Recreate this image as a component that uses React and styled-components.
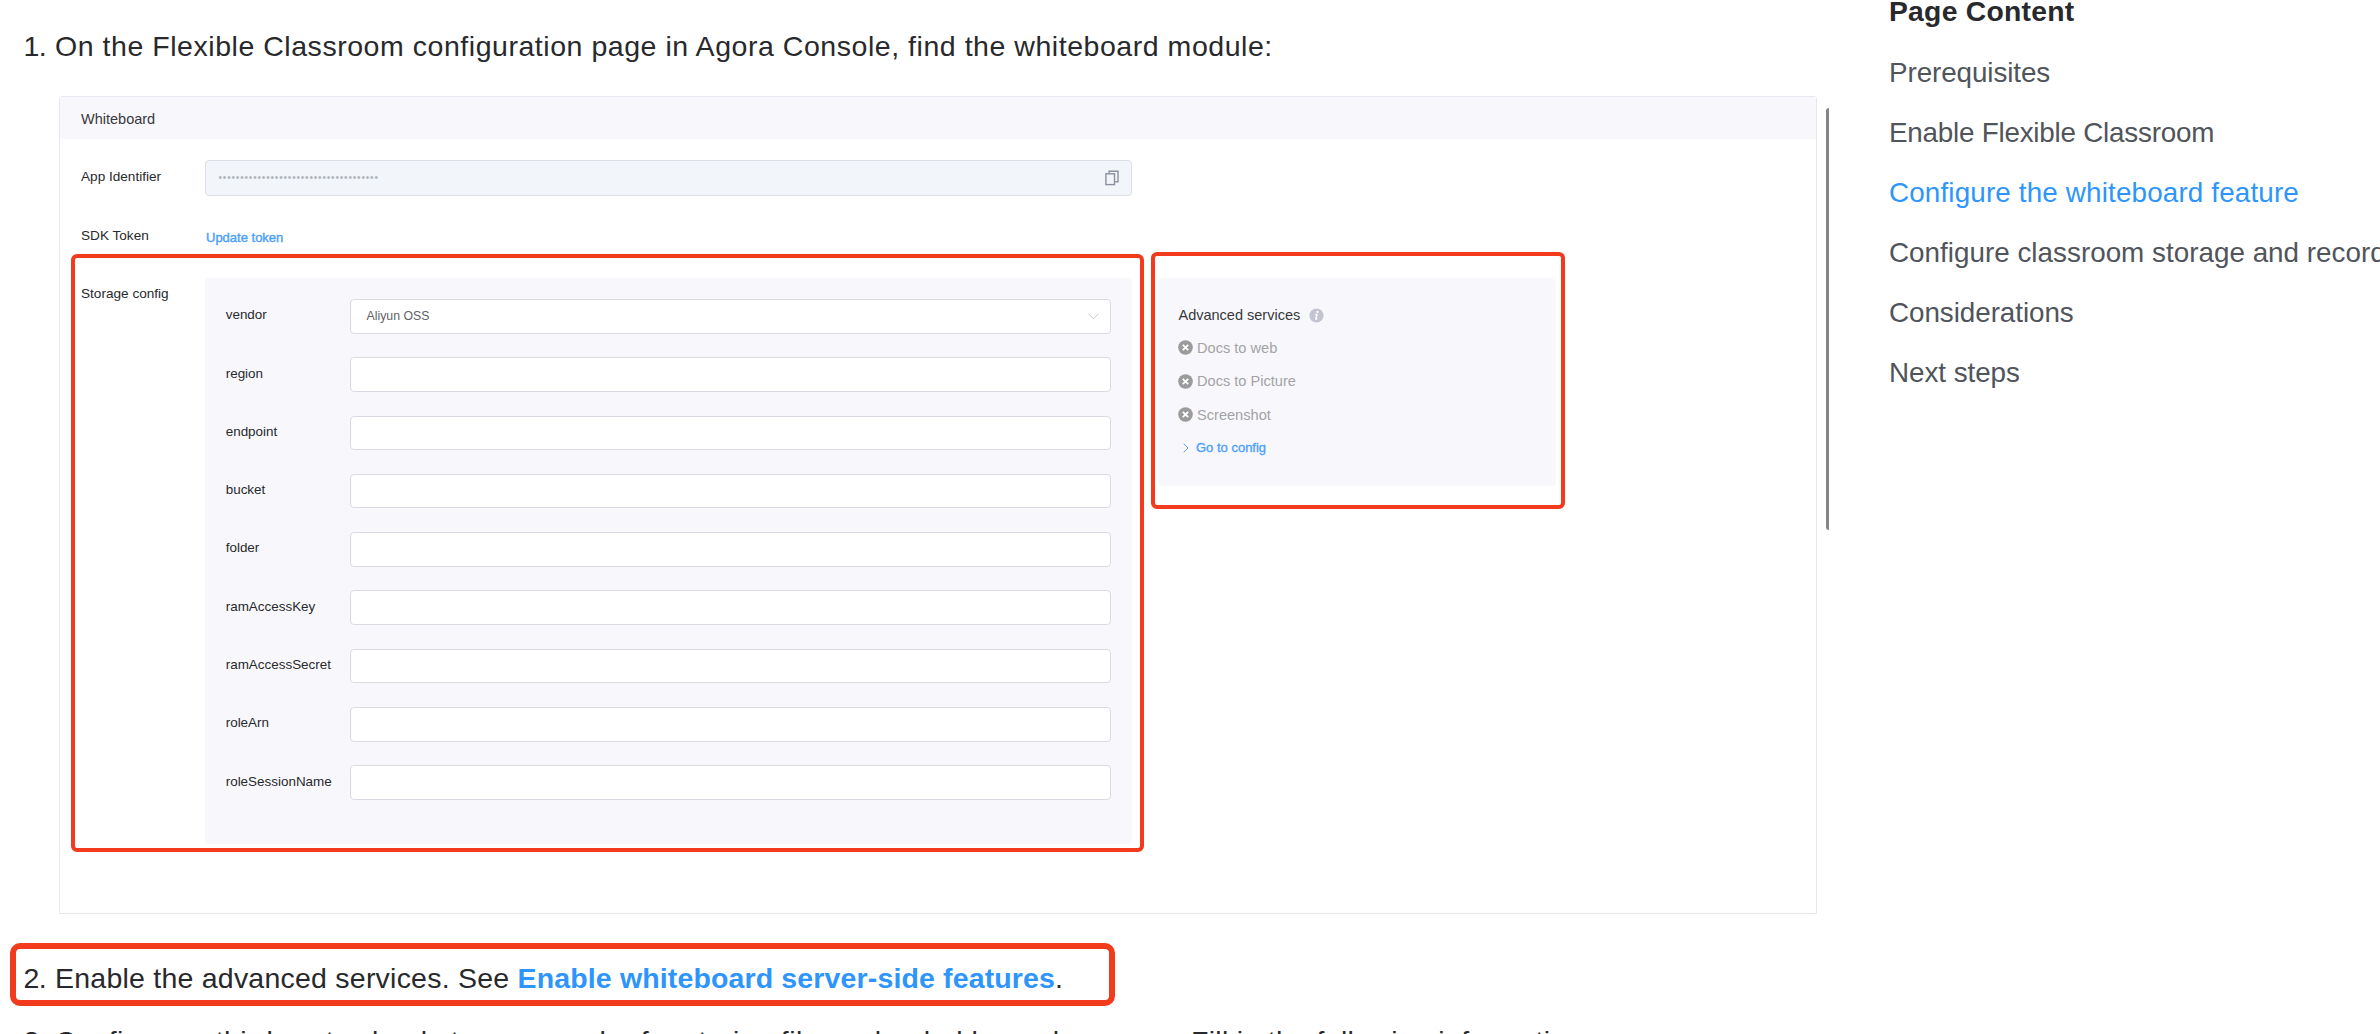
import React from "react";
import styled, { createGlobalStyle } from "styled-components";

const Global = createGlobalStyle`
  * { box-sizing: border-box; }
  html, body { margin: 0; height: 1034px; overflow: hidden; background: #fff; }
  body { font-family: "Liberation Sans", Arial, Helvetica, sans-serif; color: #28292c; }
`;

const Page = styled.div`
  display: flex;
  width: 2380px;
  height: 1034px;
  overflow: hidden;
`;

const Article = styled.main`
  position: relative;
  display: flex;
  flex-direction: column;
  flex: none;
  width: 1826px;
  height: 1034px;
  overflow: hidden;
`;

const Step = styled.div`
  display: flex;
  padding-left: 23.5px;
  margin-top: ${(p) => p.$gap}px;
  height: 40px;
  flex: none;
  font-size: 28.5px;
  line-height: 40px;
  letter-spacing: ${(p) => p.$tracking}px;
  white-space: pre;
`;

const StepNumber = styled.span`
  width: 31.5px;
  flex: none;
  letter-spacing: -0.5px;
`;

const Sentence = styled.span`
  min-width: ${(p) => p.$min || 0}px;
  letter-spacing: ${(p) => p.$tracking}px;
`;

const DocLink = styled.a`
  color: #2d95fc;
  font-weight: 700;
  letter-spacing: 0.14px;
`;

const Card = styled.section`
  display: flex;
  flex-direction: column;
  flex: none;
  width: 1758px;
  height: 818px;
  margin: 30px 0 0 59px;
  border: 1px solid #e6e8f1;
  border-radius: 3px 3px 0 0;
  background: #fff;
`;

const CardHeader = styled.header`
  height: 42px;
  padding-left: 21px;
  background: #f8f8fc;
  font-size: 14.5px;
  line-height: 45px;
  color: #37383c;
`;

const Field = styled.div`
  display: flex;
  align-items: flex-start;
  margin-top: ${(p) => p.$gap}px;
  padding-left: 21px;
  height: ${(p) => p.$height}px;
`;

const FieldLabel = styled.label`
  width: 124px;
  flex: none;
  margin-top: ${(p) => p.$drop || 0}px;
  font-size: 13.6px;
  line-height: 20px;
`;

const Identifier = styled.div`
  display: flex;
  align-items: center;
  justify-content: space-between;
  width: 927px;
  height: 36px;
  padding: 0 12px 0 12.5px;
  border: 1px solid #dcdfe6;
  border-radius: 4px;
  background: #f2f5f9;
`;

const Mask = styled.span`
  font-size: 10px;
  letter-spacing: 0.83px;
  line-height: 20px;
  color: #b0b4ba;
`;

const TokenLink = styled.a`
  margin-top: 2px;
  padding-left: 1px;
  font-size: 13px;
  line-height: 20px;
  color: #4c9ffa;
  -webkit-text-stroke: 0.4px #4c9ffa;
`;

const Storage = styled.div`
  width: 927px;
  height: 566px;
  flex: none;
  padding: 21px 21px 0 20px;
  border-radius: 4px;
  background: #f8f8fc;
`;

const StorageRow = styled.div`
  display: grid;
  grid-template-columns: 125px 1fr;
  height: 58.3px;
`;

const StorageLabel = styled.label`
  margin: 6.3px 0 0 0.7px;
  font-size: 13.45px;
  line-height: 20px;
`;

const Input = styled.div`
  display: flex;
  align-items: center;
  justify-content: space-between;
  height: 34.5px;
  padding: 0 11px 0 15.5px;
  border: 1px solid #d9dbe3;
  border-radius: 4px;
  background: #fff;
  color: #606266;
  font-size: 12.3px;
`;

const Services = styled.aside`
  width: 398px;
  height: 208px;
  flex: none;
  margin-left: 26px;
  padding: 21px 0 0 20px;
  border-radius: 4px;
  background: #f8f8fc;
`;

const ServiceTitle = styled.div`
  display: flex;
  align-items: center;
  gap: 9px;
  height: 32px;
  padding-left: 0.5px;
  font-size: 14.5px;
  color: #37383c;
`;

const Service = styled.div`
  display: flex;
  align-items: center;
  gap: 4px;
  height: 33.5px;
  font-size: 14.6px;
  color: #a3a3a6;
`;

const ConfigLink = styled.a`
  display: flex;
  align-items: center;
  gap: 7px;
  height: 32px;
  padding-left: 5px;
  font-size: 13px;
  color: #4c9ffa;
  -webkit-text-stroke: 0.35px #4c9ffa;
`;

const Icon = styled.svg`
  display: block;
  flex: none;
  fill: none;
`;

const Highlight = styled.div`
  position: absolute;
  left: ${(p) => p.$x}px;
  top: ${(p) => p.$y}px;
  width: ${(p) => p.$w}px;
  height: ${(p) => p.$h}px;
  border: ${(p) => p.$line || 4}px solid #f23b1d;
  border-radius: ${(p) => p.$round || 6}px;
`;

const ScrollThumb = styled.div`
  width: 3px;
  height: 422px;
  flex: none;
  margin-top: 108px;
  border-radius: 3px 0 0 3px;
  background: #858585;
`;

const Toc = styled.nav`
  display: flex;
  flex-direction: column;
  flex: none;
  width: 800px;
  margin-top: -17px;
  padding-left: 60px;
`;

const TocTitle = styled.div`
  height: 60px;
  font-size: 28.3px;
  font-weight: 700;
  letter-spacing: 0.25px;
  line-height: 57px;
`;

const TocItem = styled.a`
  height: 60px;
  font-size: 27.8px;
  letter-spacing: ${(p) => p.$tracking}px;
  line-height: 60px;
  white-space: nowrap;
  color: ${(p) => (p.$active ? "#2d95fc" : "#50545b")};
`;

const CopyIcon = () => (
  <Icon width="14" height="16" viewBox="0 0 14 16" stroke="#8d90a0" strokeWidth="1.4">
    <path d="M4 3.5V1.2h9v10.6h-2.8" />
    <rect x="0.9" y="3.8" width="8.6" height="10.8" />
  </Icon>
);

const SelectArrow = () => (
  <Icon width="11" height="7" viewBox="0 0 11 7" stroke="#c0c4cc" strokeWidth="1">
    <path d="M0.5 0.8l5 5 5-5" />
  </Icon>
);

const InfoIcon = () => (
  <Icon width="15" height="15" viewBox="0 0 15 15">
    <circle cx="7.5" cy="7.5" r="7.1" fill="#c4c4d0" />
    <circle cx="8.4" cy="3.9" r="1.1" fill="#fff" />
    <path d="M6.2 6.4h1.7l-1 4.7h1.3" stroke="#fff" strokeWidth="1.5" />
  </Icon>
);

const CrossIcon = () => (
  <Icon width="15" height="15" viewBox="0 0 15 15">
    <circle cx="7.5" cy="7.5" r="7.3" fill="#9b9b9b" />
    <path d="M4.8 4.8l5.4 5.4M10.2 4.8l-5.4 5.4" stroke="#fff" strokeWidth="1.8" />
  </Icon>
);

const LinkArrow = () => (
  <Icon width="6" height="10" viewBox="0 0 6 10" stroke="#5aa5f8" strokeWidth="1">
    <path d="M0.7 0.7L5 5 0.7 9.3" />
  </Icon>
);

const storageFields = [
  "vendor",
  "region",
  "endpoint",
  "bucket",
  "folder",
  "ramAccessKey",
  "ramAccessSecret",
  "roleArn",
  "roleSessionName",
];

const services = ["Docs to web", "Docs to Picture", "Screenshot"];

const contents = [
  { title: "Prerequisites", tracking: -0.08 },
  { title: "Enable Flexible Classroom", tracking: -0.22 },
  { title: "Configure the whiteboard feature", tracking: 0.16, active: true },
  { title: "Configure classroom storage and recording", tracking: 0.02 },
  { title: "Considerations", tracking: -0.05 },
  { title: "Next steps", tracking: -0.05 },
];

export default function App() {
  return (
    <Page>
      <Global />
      <Article>
        <Step $gap={26} $tracking={0.54}>
          <StepNumber>1.</StepNumber>
          <Sentence>
            On the Flexible Classroom configuration page in Agora Console, find the whiteboard module:
          </Sentence>
        </Step>
        <Card>
          <CardHeader>Whiteboard</CardHeader>
          <Field $gap={21} $height={36}>
            <FieldLabel $drop={7}>App Identifier</FieldLabel>
            <Identifier>
              <Mask>{"•".repeat(37)}</Mask>
              <CopyIcon />
            </Identifier>
          </Field>
          <Field $gap={30} $height={52}>
            <FieldLabel>SDK Token</FieldLabel>
            <TokenLink>Update token</TokenLink>
          </Field>
          <Field $gap={0} $height={566}>
            <FieldLabel $drop={6}>Storage config</FieldLabel>
            <Storage>
              {storageFields.map((name) => (
                <StorageRow key={name}>
                  <StorageLabel>{name}</StorageLabel>
                  <Input>
                    {name === "vendor" && (
                      <>
                        <span>Aliyun OSS</span>
                        <SelectArrow />
                      </>
                    )}
                  </Input>
                </StorageRow>
              ))}
            </Storage>
            <Services>
              <ServiceTitle>
                Advanced services
                <InfoIcon />
              </ServiceTitle>
              {services.map((name) => (
                <Service key={name}>
                  <CrossIcon />
                  {name}
                </Service>
              ))}
              <ConfigLink>
                <LinkArrow />
                Go to config
              </ConfigLink>
            </Services>
          </Field>
        </Card>
        <Step $gap={44} $tracking={0.23}>
          <StepNumber>2.</StepNumber>
          <Sentence>Enable the advanced services. See </Sentence>
          <DocLink>Enable whiteboard server-side features</DocLink>.
        </Step>
        <Step $gap={23} $tracking={0.3}>
          <StepNumber>3.</StepNumber>
          <Sentence $min={1136} $tracking={0.45}>
            {"Configure a third-party cloud storage vendor for storing files uploaded by end users. "}
          </Sentence>
          <Sentence>Fill in the following information:</Sentence>
        </Step>
        <Highlight $x={71} $y={254} $w={1073} $h={598} />
        <Highlight $x={1151} $y={252} $w={414} $h={257} />
        <Highlight $x={10} $y={943} $w={1105} $h={63} $line={6} $round={10} />
      </Article>
      <ScrollThumb />
      <Toc>
        <TocTitle>Page Content</TocTitle>
        {contents.map(({ title, tracking, active }) => (
          <TocItem key={title} $tracking={tracking} $active={active}>
            {title}
          </TocItem>
        ))}
      </Toc>
    </Page>
  );
}
